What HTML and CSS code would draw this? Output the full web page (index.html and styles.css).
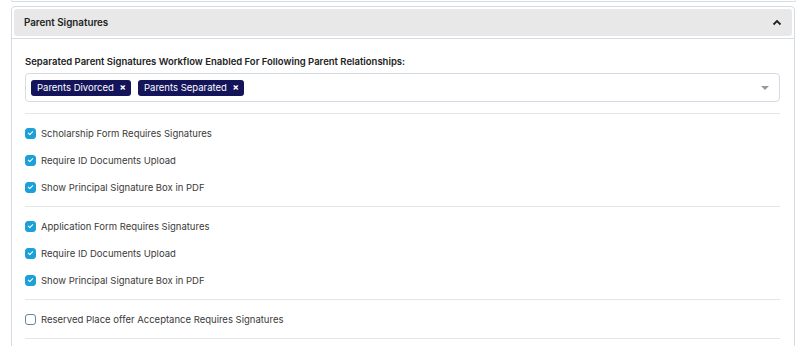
FILE: index.html
```html
<!DOCTYPE html>
<html lang="en">
  <head>
    <meta charset="UTF-8" />
    <title>Parent Signatures</title>
    <link rel="stylesheet" href="styles.css">
  </head>
  <body>
    <div class="prev-panel"></div>

    <div class="panel">
      <div class="panel-head">
        <div class="panel-title">
          <span>Parent Signatures</span>
          <svg class="chevron" width="10" height="7" viewBox="0 0 10 7">
            <path d="M1.5 5.5 L5 2 L8.5 5.5" fill="none" stroke="#222" stroke-width="1.8" />
          </svg>
        </div>
      </div>

      <div class="panel-body">
        <label class="field-label">Separated Parent Signatures Workflow Enabled For Following Parent Relationships:</label>
        <div class="multi-select">
          <span class="tag">Parents Divorced <span class="tag-x">&times;</span></span>
          <span class="tag">Parents Separated <span class="tag-x">&times;</span></span>
          <span class="caret"></span>
        </div>

        <div class="group first">
          <label class="check-row"><span class="box checked"></span>Scholarship Form Requires Signatures</label>
          <label class="check-row"><span class="box checked"></span>Require ID Documents Upload</label>
          <label class="check-row"><span class="box checked"></span>Show Principal Signature Box in PDF</label>
        </div>
        <div class="group">
          <label class="check-row"><span class="box checked"></span>Application Form Requires Signatures</label>
          <label class="check-row"><span class="box checked"></span>Require ID Documents Upload</label>
          <label class="check-row"><span class="box checked"></span>Show Principal Signature Box in PDF</label>
        </div>
        <div class="group last">
          <label class="check-row"><span class="box"></span>Reserved Place offer Acceptance Requires Signatures</label>
        </div>
      </div>
    </div>
  </body>
</html>
```

FILE: styles.css
```css
body {
  font-family: Inter, "Noto Sans", sans-serif;
  background-color: #fff;
  margin: 0;
  color: #333;
  font-size: 9.5px;
}

.prev-panel {
  height: 1px;
  margin: 0 4px 0 11px;
  border: 1px solid #d3dce4;
  border-top: none;
  border-radius: 0 0 4px 4px;
}

.panel {
  margin: 4px 5px 0 11px;
  border: 1px solid #d3dce4;
  border-radius: 4px;
}

.panel-head {
  padding: 2px;
  border-bottom: 1px solid #d3dce4;
}

.panel-title {
  display: flex;
  align-items: center;
  justify-content: space-between;
  height: 27px;
  padding: 0 10px 0 10px;
  background-color: #e8e8e8;
  border-radius: 3px;
  font-weight: 600;
  font-size: 9.8px;
  color: #222;
}

.panel-body {
  padding: 17px 14px 10px 13px;
}

.field-label {
  display: block;
  font-weight: 600;
  color: #222;
  margin-bottom: 6px;
}

.multi-select {
  display: flex;
  align-items: center;
  gap: 7px;
  height: 27px;
  padding: 0 5px;
  border: 1px solid #d3dce4;
  border-radius: 4px;
}

.tag {
  background-color: #14145a;
  color: #fff;
  border-radius: 3px;
  padding: 2px 5px 2px 6px;
  line-height: 12px;
}

.tag-x {
  font-weight: 700;
  margin-left: 3px;
}

.caret {
  margin-left: auto;
  margin-right: 5px;
  width: 0;
  height: 0;
  border-left: 4px solid transparent;
  border-right: 4px solid transparent;
  border-top: 4px solid #999;
}

.group {
  border-top: 1px solid #e4e7ea;
  padding: 6px 0 5px;
}

.group.first {
  margin-top: 11px;
}

.group.last {
  border-bottom: 1px solid #e4e7ea;
}

.check-row {
  display: flex;
  align-items: center;
  height: 27px;
  color: #3a3a3a;
}

.box {
  width: 9px;
  height: 9px;
  border: 1px solid #6b8596;
  border-radius: 3px;
  margin-right: 5px;
  position: relative;
}

.box.checked {
  background-color: #1ba0d8;
  border-color: #1ba0d8;
}

.box.checked::after {
  content: "";
  position: absolute;
  left: 3px;
  top: 1px;
  width: 2px;
  height: 4px;
  border: solid #fff;
  border-width: 0 1.5px 1.5px 0;
  transform: rotate(45deg);
}
```
